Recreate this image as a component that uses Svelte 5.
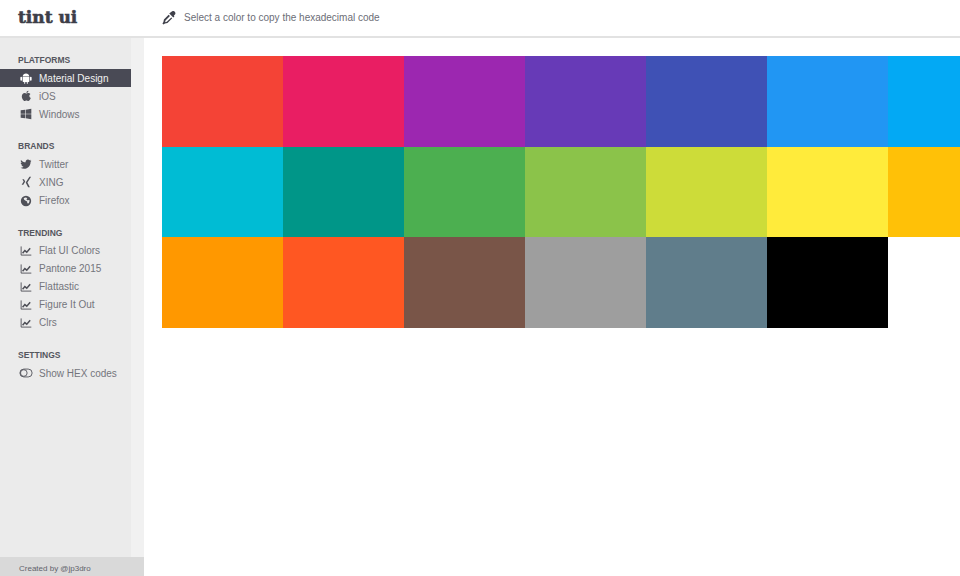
<script>
  const hint = "Select a color to copy the hexadecimal code";
  const colors = [
    "#f44336", "#e91e63", "#9c27b0", "#673ab7", "#3f51b5", "#2196f3", "#03a9f4",
    "#00bcd4", "#009688", "#4caf50", "#8bc34a", "#cddc39", "#ffeb3b", "#ffc107",
    "#ff9800", "#ff5722", "#795548", "#9e9e9e", "#607d8b", "#000000"
  ];
  const sections = [
    { title: "PLATFORMS", items: [
      { label: "Material Design", icon: "android", active: true },
      { label: "iOS", icon: "apple" },
      { label: "Windows", icon: "windows" }
    ] },
    { title: "BRANDS", items: [
      { label: "Twitter", icon: "twitter" },
      { label: "XING", icon: "xing" },
      { label: "Firefox", icon: "globe" }
    ] },
    { title: "TRENDING", items: [
      { label: "Flat UI Colors", icon: "chart" },
      { label: "Pantone 2015", icon: "chart" },
      { label: "Flattastic", icon: "chart" },
      { label: "Figure It Out", icon: "chart" },
      { label: "Clrs", icon: "chart" }
    ] },
    { title: "SETTINGS", items: [
      { label: "Show HEX codes", icon: "toggle" }
    ] }
  ];
</script>

<div class="page">
  <header>
    <div class="logo">tint ui</div>
    <svg class="dropper" viewBox="0 0 16 16" width="14" height="14">
      <path fill="#3f404a" d="M9.8 1.8 11.2.5c1-.8 2.5-.7 3.4.3.9 1 1 2.4.2 3.3L13.5 5.5l.7.7-1.3 1.3-4.6-4.6 1.300-1.300z" />
      <path fill="#3f404a" d="M7.6 4.3 2.2 9.7 1.6 12.6.5 14.300l1.200 1.200 1.700-1.100 2.900-.6 5.400-5.400-1.100-1.100-5.100 5.100-1.900.4.4-1.900 5.100-5.100z" />
    </svg>
    <span class="hint">{hint}</span>
  </header>
  <div class="body">
    <aside>
      <div class="nav">
        {#each sections as section}
          <section>
            <h3>{section.title}</h3>
            <ul>
              {#each section.items as item}
                <li class:active={item.active}>
                  <svg viewBox={item.icon === "toggle" ? "0 0 16 16" : "-1.2 -1.2 18.4 18.4"} width="14" height="14" class="icon">
                    {#if item.icon === "android"}
                      <path fill="currentColor" d="M3.6 6C3.9 3.4 5.7 2 8 2s4.1 1.400 4.400 4zM3.600 6.700h8.800v5.600c0 .6-.4 1-1 1H4.600c-.6 0-1-.4-1-1zM1.700 6.500c.6 0 1.100.4 1.100 1v3.200c0 .6-.5 1-1.100 1s-1.100-.4-1.100-1V7.500c0-.6.500-1 1.100-1zM14.300 6.500c.6 0 1.100.4 1.100 1v3.200c0 .6-.5 1-1.100 1s-1.100-.4-1.100-1V7.500c0-.6.500-1 1.100-1zM5.300 13.500h1.800v1.200c0 .5-.4.800-.9.800s-.9-.3-.9-.8zM8.900 13.500h1.800v1.200c0 .5-.4.800-.9.800s-.9-.3-.9-.8z" />
                    {:else if item.icon === "apple"}
                      <path fill="currentColor" d="M11.200 1c.1 1.300-1 2.700-2.700 2.800C8.400 2.400 9.700 1.100 11.200 1zM8.400 4.600c.7 0 1.500-.7 2.800-.7 1 0 2 .5 2.600 1.400-2.200 1.300-1.800 4.300.5 5.200-.6 1.700-2 4-3.300 4-.9 0-1.300-.6-2.400-.6s-1.500.6-2.400.6C4.600 14.500 2.500 11.300 2.500 8.600c0-2.800 1.800-4.600 3.600-4.600 1 0 1.800.6 2.300.6z" />
                    {:else if item.icon === "windows"}
                      <path fill="currentColor" d="M1 3.200 6.900 2.400v5.200H1zM7.700 2.300 15 1.200v6.400H7.700zM1 8.400h5.900v5.200L1 12.800zM7.700 8.400H15v6.400l-7.300-1.100z" />
                    {:else if item.icon === "twitter"}
                      <path fill="currentColor" d="M15 3.600c-.5.200-1.100.4-1.700.5.600-.4 1.100-1 1.300-1.700-.6.300-1.200.6-1.900.7C12.200 2.500 11.400 2.100 10.500 2.100c-1.700 0-3 1.400-3 3 0 .2 0 .5.100.7C5.100 5.700 2.900 4.500 1.500 2.700c-.3.400-.4 1-.4 1.500 0 1 .5 2 1.300 2.500-.5 0-1-.2-1.400-.4 0 1.500 1 2.700 2.400 3-.5.100-.9.200-1.400.1.400 1.200 1.500 2 2.800 2.100C3.700 12.500 2.300 13 .8 12.900 2.200 13.700 3.700 14.200 5.400 14.200c5.500 0 8.600-4.600 8.600-8.600v-.4c.4-.4.800-1 1-1.600z" />
                    {:else if item.icon === "xing"}
                      <path fill="currentColor" d="M12.500 1H14.700L9.900 8.700l3.200 6.300h-2.300L7.600 8.700zM3.200 4.300h2.100l1.700 3-2.500 4.200H2.300l2.600-4.200z" />
                    {:else if item.icon === "globe"}
                      <path fill="currentColor" fill-rule="evenodd" d="M8 1.200a6.800 6.800 0 1 0 0 13.600A6.800 6.800 0 0 0 8 1.200zM5 4.500c1-.9 2.300-1.200 3.600-.9l1.200 1-1.300 1.100 1.200 1.300 2.800-.4c.3 1.700-.1 3.300-1.300 4.600l-1.500-.4-.2-2L7 7.400 5.400 6z" />
                    {:else if item.icon === "chart"}
                      <path fill="none" stroke="currentColor" stroke-width="1.200" d="M1.600 2v11.400H15" />
                      <path fill="none" stroke="currentColor" stroke-width="2" d="M3.500 11 6.500 7.500 9 9.500 13.500 4.500" />
                    {:else}
                      <rect x="1" y="3.500" width="14" height="9" rx="4.500" fill="none" stroke="currentColor" stroke-width="1" />
                      <circle cx="5.500" cy="8" r="3.800" fill="none" stroke="currentColor" stroke-width="1" />
                    {/if}
                  </svg>
                  <span>{item.label}</span>
                </li>
              {/each}
            </ul>
          </section>
        {/each}
      </div>
      <footer>Created by @jp3dro</footer>
    </aside>
    <main>
      <div class="swatches">
        {#each colors as color}
          <div class="swatch" style="background: {color}"></div>
        {/each}
      </div>
    </main>
  </div>
</div>

<style>
  :global(body) {
    margin: 0;
    background: #fff;
    overflow: hidden;
  }
  .page {
    width: 960px;
    height: 576px;
    display: flex;
    flex-direction: column;
    font-family: "Liberation Sans", Arial, sans-serif;
    overflow: hidden;
  }
  header {
    height: 36px;
    flex: none;
    display: flex;
    align-items: center;
    background: #fff;
    border-bottom: 2px solid #e2e2e2;
    padding-left: 18px;
  }
  .logo {
    width: 144px;
    font-family: "DejaVu Serif", serif;
    font-weight: 700;
    font-size: 17px;
    color: #3d3e48;
    -webkit-text-stroke: 0.6px #3d3e48;
    padding-bottom: 3px;
  }
  .dropper {
    margin-right: 8px;
    margin-bottom: 1px;
  }
  .hint {
    font-size: 10px;
    color: #6c6d76;
    margin-bottom: 1px;
  }
  .body {
    flex: 1;
    display: flex;
    min-height: 0;
  }
  aside {
    width: 144px;
    flex: none;
    display: flex;
    flex-direction: column;
    background: #f1f1f1;
  }
  .nav {
    flex: 1;
    width: 131px;
    padding-top: 15px;
    background: #ebebeb;
  }
  section {
    margin-bottom: 16px;
  }
  h3 {
    margin: 0 0 2px;
    padding-left: 18px;
    font-size: 8.5px;
    line-height: 14px;
    font-weight: 700;
    color: #55565e;
  }
  ul {
    list-style: none;
    margin: 0;
    padding: 0;
  }
  li {
    height: 18.1px;
    display: flex;
    align-items: center;
    padding-left: 19px;
    font-size: 10px;
    color: #74757c;
  }
  li.active {
    background: #494a55;
    color: #f2f2f2;
  }
  .icon {
    flex: none;
    margin-right: 6px;
    color: #4f5058;
  }
  li.active .icon {
    color: #fff;
  }
  footer {
    height: 19px;
    flex: none;
    background: #d9d9d9;
    padding-left: 19px;
    font-size: 8px;
    line-height: 24px;
    color: #62636b;
    overflow: hidden;
  }
  main {
    flex: 1;
    min-width: 0;
    padding: 18px 0 0 18px;
    overflow: hidden;
  }
  .swatches {
    display: grid;
    grid-template-columns: repeat(7, 121px);
    grid-auto-rows: 90.67px;
    width: 847px;
  }
</style>
